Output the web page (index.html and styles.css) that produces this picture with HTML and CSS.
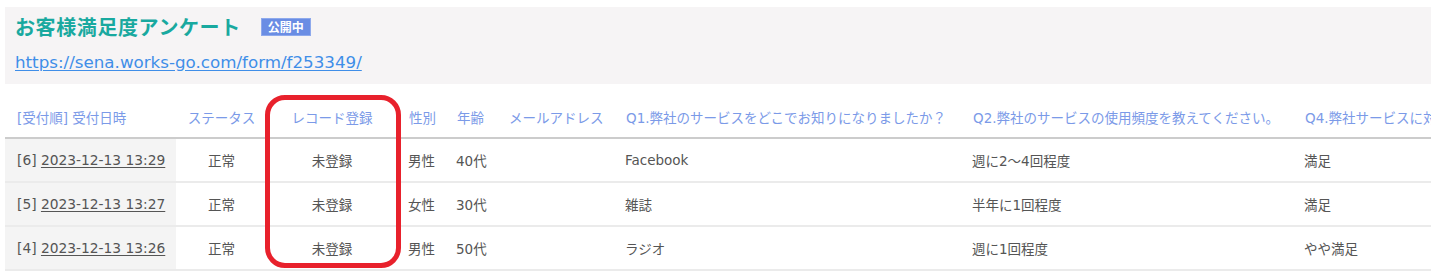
FILE: index.html
```html
<!DOCTYPE html>
<html lang="ja">
<head>
<meta charset="utf-8">
<link rel="stylesheet" href="styles.css">
</head>
<body>
<div class="page">
  <div class="panel">
    <div class="title-row">
      <h1 class="title">お客様満足度アンケート</h1>
      <span class="badge">公開中</span>
    </div>
    <a class="url" href="#">https://sena.works-go.com/form/f253349/</a>
  </div>
  <div class="table-wrap">
    <table class="list">
      <colgroup>
        <col class="c1"><col class="c2"><col class="c3"><col class="c4"><col class="c5"><col class="c6"><col class="c7"><col class="c8"><col class="c9">
      </colgroup>
      <thead>
        <tr>
          <th>[受付順] 受付日時</th>
          <th class="center">ステータス</th>
          <th class="center">レコード登録</th>
          <th>性別</th>
          <th>年齢</th>
          <th>メールアドレス</th>
          <th>Q1.弊社のサービスをどこでお知りになりましたか？</th>
          <th>Q2.弊社のサービスの使用頻度を教えてください。</th>
          <th>Q4.弊社サービスに対する満足度を教えてください。</th>
        </tr>
      </thead>
      <tbody>
        <tr>
          <td class="first">[6] <a href="#">2023-12-13 13:29</a></td>
          <td class="center">正常</td>
          <td class="center">未登録</td>
          <td>男性</td>
          <td>40代</td>
          <td></td>
          <td>Facebook</td>
          <td>週に2～4回程度</td>
          <td>満足</td>
        </tr>
        <tr>
          <td class="first">[5] <a href="#">2023-12-13 13:27</a></td>
          <td class="center">正常</td>
          <td class="center">未登録</td>
          <td>女性</td>
          <td>30代</td>
          <td></td>
          <td>雑誌</td>
          <td>半年に1回程度</td>
          <td>満足</td>
        </tr>
        <tr>
          <td class="first">[4] <a href="#">2023-12-13 13:26</a></td>
          <td class="center">正常</td>
          <td class="center">未登録</td>
          <td>男性</td>
          <td>50代</td>
          <td></td>
          <td>ラジオ</td>
          <td>週に1回程度</td>
          <td>やや満足</td>
        </tr>
      </tbody>
    </table>
    <div class="highlight"></div>
  </div>
</div>
</body>
</html>
```

FILE: styles.css
```css
html, body {
  margin: 0;
  padding: 0;
  background: #ffffff;
  overflow: hidden;
}
body {
  font-family: "DejaVu Sans", "Noto Sans CJK JP", sans-serif;
  color: #555555;
}
.page {
  padding: 7px 0 0 5px;
  width: 1426px;
  overflow: hidden;
}
.panel {
  background: #f6f4f5;
  height: 77px;
  padding: 0 0 0 10px;
  box-sizing: border-box;
  display: flex;
  flex-direction: column;
}
.title-row {
  display: flex;
  align-items: center;
  gap: 20px;
  height: 40px;
}
.title {
  margin: 0;
  font-family: "Noto Sans CJK JP", sans-serif;
  font-size: 20px;
  font-weight: bold;
  color: #19a99f;
  line-height: 24px;
  letter-spacing: 0.6px;
}
.badge {
  font-family: "Noto Sans CJK JP", sans-serif;
  background: #6a8de4;
  color: #ffffff;
  font-size: 12px;
  line-height: 14px;
  padding: 1px 6px;
  border: 1px solid #8ea9ec;
  font-weight: bold;
}
.url {
  color: #3f8ee8;
  font-size: 16.7px;
  line-height: 20px;
  margin-top: 5px;
  text-decoration: underline;
  text-underline-offset: 2px;
  align-self: flex-start;
}
.table-wrap {
  position: relative;
  margin-top: 12px;
}
.list {
  border-collapse: collapse;
  table-layout: fixed;
  width: 1440px;
  font-size: 13.5px;
}
.c1 { width: 171px; }
.c2 { width: 91px; }
.c3 { width: 130px; }
.c4 { width: 48px; }
.c5 { width: 52px; }
.c6 { width: 117px; }
.c7 { width: 347px; }
.c8 { width: 332px; }
.c9 { width: 152px; }
.list th {
  color: #7b9ae8;
  font-weight: normal;
  text-align: left;
  white-space: nowrap;
  overflow: hidden;
  padding: 0 0 0 12px;
  height: 41px;
  border-bottom: 2px solid #cccccc;
}
.list td {
  white-space: nowrap;
  padding: 0 0 0 11px;
  height: 42px;
  border-bottom: 2px solid #ebebeb;
  color: #555555;
}
.list th.center, .list td.center {
  text-align: center;
  padding: 0;
}
.list td.first {
  background: #f4f4f4;
  padding-left: 12px;
  font-size: 13.8px;
}
.list td.first a {
  color: #555555;
  text-decoration: underline;
  text-underline-offset: 2px;
}
.highlight {
  position: absolute;
  left: 260px;
  top: -1px;
  width: 126px;
  height: 163px;
  border: 5px solid #e8212c;
  border-radius: 20px;
  pointer-events: none;
}
```
